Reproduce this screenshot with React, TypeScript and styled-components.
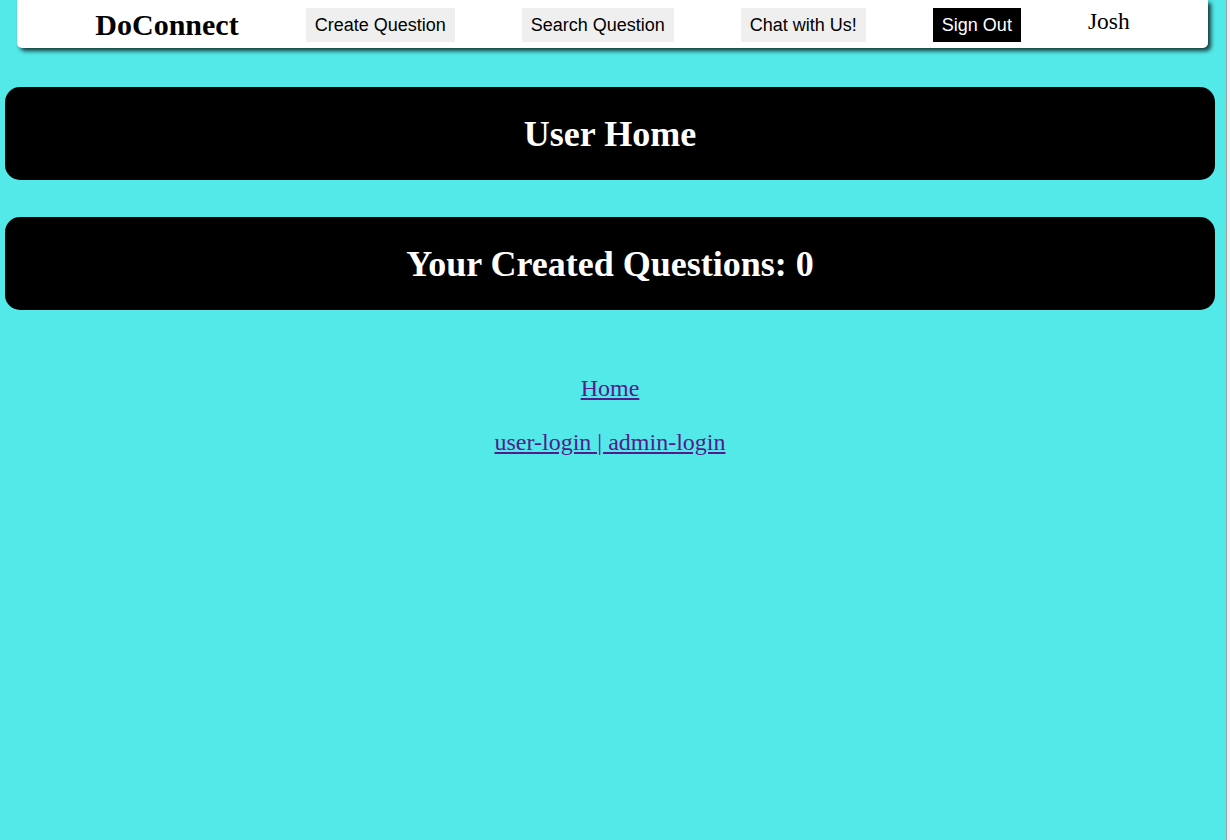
import React from "react";
import styled, { createGlobalStyle } from "styled-components";

const Global = createGlobalStyle`
  html, body { margin: 0; padding: 0; background: #f0f0f0; }
  #root { min-height: 100vh; }
`;

const Page = styled.div`
  width: 1227px;
  min-height: 840px;
  background: #53e9e8;
  border-right: 1px solid #a0a0a0;
  padding-right: 6px;
  box-sizing: border-box;
  font-family: "Liberation Serif", "Times New Roman", serif;
  overflow: hidden;
`;

const NavBar = styled.nav`
  margin: 0 12px 0 17px;
  height: 48px;
  background: #ffffff;
  border-radius: 0 0 5px 5px;
  box-shadow: 3px 3px 4px rgba(0, 0, 0, 0.75);
  display: flex;
  align-items: flex-start;
  justify-content: center;
  gap: 67px;
`;

const Brand = styled.div`
  font-family: "Liberation Serif", "Times New Roman", serif;
  font-weight: bold;
  font-size: 30px;
  line-height: 32px;
  margin-top: 9px;
  color: #000;
`;

const NavButton = styled.button<{ $dark?: boolean }>`
  margin-top: 8px;
  height: 34px;
  padding: 0 9px;
  border: none;
  background: ${(p) => (p.$dark ? "#000000" : "#efefef")};
  color: ${(p) => (p.$dark ? "#ffffff" : "#000000")};
  font-family: "Liberation Sans", Arial, sans-serif;
  font-size: 18px;
  cursor: pointer;
`;

const UserName = styled.div`
  font-family: "Liberation Serif", "Times New Roman", serif;
  font-size: 23.5px;
  line-height: 26px;
  margin-top: 8px;
  color: #000;
`;

const Content = styled.main`
  padding: 39px 5px 0 5px;
  display: flex;
  flex-direction: column;
  gap: 37px;
`;

const Banner = styled.h1`
  margin: 0;
  height: 93px;
  background: #000;
  color: #fff;
  border-radius: 15px;
  display: flex;
  align-items: center;
  justify-content: center;
  font-family: "Liberation Serif", "Times New Roman", serif;
  font-weight: bold;
  font-size: 36px;
`;

const Links = styled.div`
  margin-top: 63px;
  display: flex;
  flex-direction: column;
  align-items: center;
  gap: 24px;
  font-size: 24px;
  line-height: 30px;
`;

const Link = styled.a`
  color: #551a8b;
  text-decoration: underline;
`;

export default function App() {
  return (
    <Page>
      <Global />
      <NavBar>
        <Brand>DoConnect</Brand>
        <NavButton>Create Question</NavButton>
        <NavButton>Search Question</NavButton>
        <NavButton>Chat with Us!</NavButton>
        <NavButton $dark>Sign Out</NavButton>
        <UserName>Josh</UserName>
      </NavBar>
      <Content>
        <Banner>User Home</Banner>
        <Banner>Your Created Questions: 0</Banner>
      </Content>
      <Links>
        <Link href="#">Home</Link>
        <Link href="#">user-login | admin-login</Link>
      </Links>
    </Page>
  );
}
